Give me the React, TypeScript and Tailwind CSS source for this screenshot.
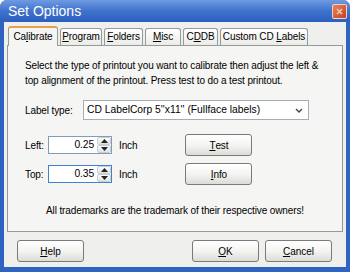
import React from 'react';

const font = { fontFamily: '"Liberation Sans", Arial, sans-serif' };

function Tab({ label, u, w, active }: { label: string; u: number; w: string; active?: boolean }) {
  return (
    <div
      className={`${w} border border-b-0 border-[#919b9c] rounded-t-[3px] text-[10px] tracking-[-0.1px] text-black leading-none flex items-center justify-center ${
        active
          ? 'bg-[#f5f5f3] h-[20px] -mb-px relative z-10 pb-[1px] border-t-[#e8a04a] border-t-2'
          : 'h-[17px] bg-gradient-to-b from-white to-[#ecebe6]'
      }`}
    >
      <span className="whitespace-pre">
        {label.slice(0, u)}
        <span className="underline">{label[u]}</span>
        {label.slice(u + 1)}
      </span>
    </div>
  );
}

function Btn({ children }: { children: React.ReactNode }) {
  return (
    <div className="w-[67px] h-[22px] rounded-[3px] border border-[#7a7a7a] bg-gradient-to-b from-white via-[#f4f4f2] to-[#dcdcd6] flex items-center justify-center text-[10px] text-black">
      {children}
    </div>
  );
}

function Spin({ value, focus }: { value: string; focus?: boolean }) {
  return (
    <div className={`flex h-[18px] w-[64px] border bg-white ${focus ? 'border-[#3b82d8]' : 'border-[#7f9db9]'}`}>
      <div className="flex-1 flex items-center justify-end pr-[3px] text-[10.3px] text-black">{value}</div>
      <div className="w-[14px] flex flex-col">
        <div className="flex-1 flex items-center justify-center bg-gradient-to-b from-[#fdfdfd] to-[#e2e2de] border border-[#c9ced6] rounded-[2px]">
          <svg width="7" height="4" viewBox="0 0 7 4"><path d="M0 4 L3.5 0 L7 4 Z" fill="#222" /></svg>
        </div>
        <div className="flex-1 flex items-center justify-center bg-gradient-to-b from-[#fdfdfd] to-[#e2e2de] border border-[#c9ced6] rounded-[2px]">
          <svg width="7" height="4" viewBox="0 0 7 4"><path d="M0 0 L3.5 4 L7 0 Z" fill="#222" /></svg>
        </div>
      </div>
    </div>
  );
}

export default function App() {
  return (
    <div style={font} className="w-[350px] h-[272px] bg-[#2f63c2] rounded-t-[7px] flex flex-col overflow-hidden">
      {/* title bar */}
      <div className="h-[22px] shrink-0 flex items-center justify-between pl-[8px] pr-[3px] bg-gradient-to-b from-[#6f9be0] via-[#3f72cc] to-[#2d5fc0]">
        <span className="text-white text-[14px] leading-none">Set Options</span>
        <div className="w-[15px] h-[15px] rounded-[2px] border border-white/70 bg-gradient-to-br from-[#e8845a] to-[#c2421c] flex items-center justify-center">
          <svg width="7" height="7" viewBox="0 0 7 7"><path d="M1 1 L6 6 M6 1 L1 6" stroke="#f6c6b0" strokeWidth="1.6" /></svg>
        </div>
      </div>

      {/* body */}
      <div className="flex-1 mx-[4px] mb-[5px] bg-[#efefed] flex flex-col pt-[3px] pl-[3px] pr-[3px]">
        <div className="flex items-end gap-[2px] pl-[1px] h-[20px]">
          <Tab label="Calibrate" u={2} w="w-[50px]" active />
          <Tab label="Program" u={0} w="w-[42px]" />
          <Tab label="Folders" u={0} w="w-[39px]" />
          <Tab label="Misc" u={0} w="w-[36px]" />
          <Tab label="CDDB" u={1} w="w-[35px]" />
          <Tab label="Custom CD Labels" u={10} w="w-[88px]" />
        </div>

        <div className="h-[187px] border border-[#919b9c] bg-[#f5f5f3] flex flex-col text-[10px] tracking-[-0.12px] text-black">
          <div className="pl-[17px] pt-[12px] leading-[15px]">
            <div>Select the type of printout you want to calibrate then adjust the left &amp;</div>
            <div>top alignment of the printout. Press test to do a test printout.</div>
          </div>

          <div className="flex items-center pl-[17px] mt-[12px]">
            <span className="w-[58px]">Label type:</span>
            <div className="w-[226px] h-[20px] border border-[#a5acb5] bg-white flex items-center justify-between pl-[3px] pr-[5px]">
              <span className="text-[10.3px] tracking-normal">CD LabelCorp 5''x11'' (Fullface labels)</span>
              <svg width="8" height="5" viewBox="0 0 8 5"><path d="M1 1 L4 4 L7 1" stroke="#444" strokeWidth="1.4" fill="none" /></svg>
            </div>
          </div>

          <div className="flex items-start pl-[17px]">
            <div className="flex flex-col gap-[11px] mt-[16px]">
              <div className="flex items-center">
                <span className="w-[23px]">Left:</span>
                <Spin value="0.25" />
                <span className="ml-[7px]">Inch</span>
              </div>
              <div className="flex items-center">
                <span className="w-[23px]">Top:</span>
                <Spin value="0.35" focus />
                <span className="ml-[7px]">Inch</span>
              </div>
            </div>
            <div className="flex flex-col gap-[7px] ml-[48px] mt-[14px]">
              <Btn><span className="underline">T</span>est</Btn>
              <Btn><span className="underline">I</span>nfo</Btn>
            </div>
          </div>

          <div className="text-center mt-[19px] leading-[14px]">All trademarks are the trademark of their respective owners!</div>
        </div>

        <div className="flex items-center mt-[8px] pl-[10px] pr-[11px]">
          <Btn><span className="underline">H</span>elp</Btn>
          <div className="flex-1" />
          <Btn><span className="underline">O</span>K</Btn>
          <div className="w-[6px]" />
          <Btn><span className="underline">C</span>ancel</Btn>
        </div>
      </div>
    </div>
  );
}
